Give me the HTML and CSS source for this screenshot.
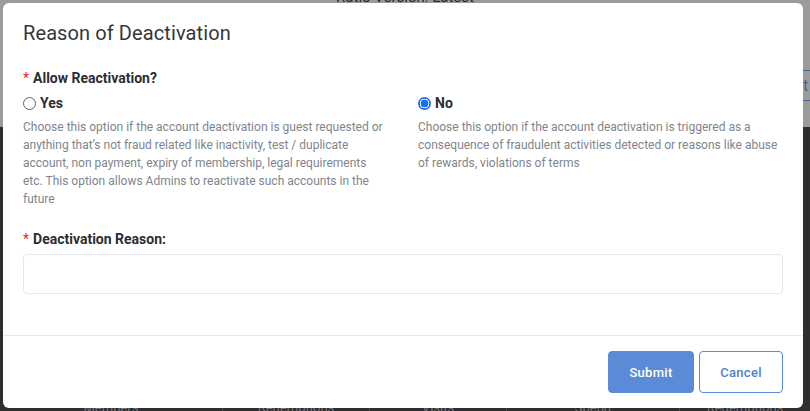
FILE: index.html
```html
<!DOCTYPE html>
<html lang="en">
<head>
<meta charset="utf-8">
<title>Reason of Deactivation</title>
<link rel="stylesheet" href="styles.css">
</head>
<body>
  <div class="page">
    <header class="page-head">
      <div class="version">Ratio Version: Latest</div>
      <button class="export">Export</button>
    </header>
    <section class="table-area">
      <div class="table-row">
        <div class="cell c1">Members</div>
        <div class="cell c2">Redemptions</div>
        <div class="cell c3">Visits</div>
        <div class="cell c4">Spend</div>
        <div class="cell c5">Redemptions</div>
      </div>
    </section>
  </div>

  <div class="backdrop"></div>

  <div class="modal" role="dialog" aria-labelledby="modal-title">
    <div class="modal-header">
      <h2 id="modal-title" class="modal-title">Reason of Deactivation</h2>
    </div>
    <div class="modal-body">
      <div class="field-label"><span class="req">*</span>Allow Reactivation?</div>
      <div class="options">
        <div class="option option-left">
          <label class="radio">
            <input type="radio" name="reactivation" value="yes">
            <span>Yes</span>
          </label>
          <p class="option-help">Choose this option if the account deactivation is guest requested or anything that’s not fraud related like inactivity, test / duplicate account, non payment, expiry of membership, legal requirements etc. This option allows Admins to reactivate such accounts in the future</p>
        </div>
        <div class="option">
          <label class="radio">
            <input type="radio" name="reactivation" value="no" checked>
            <span>No</span>
          </label>
          <p class="option-help">Choose this option if the account deactivation is triggered as a consequence of fraudulent activities detected or reasons like abuse of rewards, violations of terms</p>
        </div>
      </div>
      <div class="field-label reason-label"><span class="req">*</span>Deactivation Reason:</div>
      <input class="text-input" type="text" aria-label="Deactivation Reason">
    </div>
    <div class="modal-footer">
      <button class="btn btn-primary">Submit</button>
      <button class="btn btn-outline">Cancel</button>
    </div>
  </div>
</body>
</html>
```

FILE: styles.css
```css
* {
  box-sizing: border-box;
}

html, body {
  margin: 0;
  padding: 0;
  width: 810px;
  height: 411px;
  overflow: hidden;
}

body {
  font-family: Roboto, "Liberation Sans", Arial, sans-serif;
  background: #2e2d30;
  position: relative;
}

/* page behind the dialog (already dimmed) */
.page {
  display: flex;
  flex-direction: column;
  height: 411px;
}

.page-head {
  height: 127px;
  background: #9b9b9c;
  position: relative;
}

.version {
  text-align: center;
  font-size: 15px;
  color: #2a2a2a;
  margin-top: -11px;
  padding-left: 0;
  line-height: 16px;
}

.export {
  position: absolute;
  left: 758px;
  top: 70px;
  width: 60px;
  height: 31px;
  background: transparent;
  border: 1px solid #4b6290;
  border-radius: 3px;
  color: #4b6290;
  font: 16px Roboto, "Liberation Sans", sans-serif;
  text-align: left;
  padding: 0 0 0 3px;
}

.table-area {
  flex: 1;
  background: #2e2d30;
  display: flex;
  flex-direction: column;
  justify-content: flex-end;
}

.table-row {
  display: flex;
  height: 18px;
  margin-bottom: -6px;
}

.cell {
  color: #77767a;
  font-size: 13px;
  border-right: 1px solid #4a494d;
  text-align: center;
  line-height: 18px;
}

.c1 { width: 223px; }
.c2 { width: 147px; }
.c3 { width: 137px; }
.c4 { width: 173px; }
.c5 { width: 130px; border-right: none; }

.backdrop {
  display: none;
}

/* dialog */
.modal {
  position: absolute;
  left: 3px;
  top: 3px;
  width: 800px;
  height: 405px;
  background: #ffffff;
  border-radius: 6px;
  display: flex;
  flex-direction: column;
}

.modal-header {
  padding: 18px 20px 0;
}

.modal-title {
  margin: 0;
  font-size: 20px;
  line-height: 24px;
  font-weight: 400;
  color: #34373b;
  letter-spacing: 0.1px;
}

.modal-body {
  padding: 23px 20px 41px;
  border-bottom: 1px solid #e6eaf0;
}

.field-label {
  font-size: 14px;
  line-height: 20px;
  font-weight: 700;
  color: #2b2e32;
}

.req {
  color: #f5222d;
  margin-right: 4px;
  font-weight: 400;
}

.options {
  display: grid;
  grid-template-columns: 395px 1fr;
  margin-top: 5px;
}

.option-left {
  padding-right: 30px;
}

.radio {
  display: flex;
  align-items: center;
  gap: 4px;
  font-size: 14px;
  line-height: 20px;
  font-weight: 700;
  color: #2b2e32;
}

.radio input {
  appearance: none;
  -webkit-appearance: none;
  margin: 0;
  width: 13px;
  height: 13px;
  border-radius: 50%;
  border: 1px solid #5f6266;
  background: #fff;
}

.radio input:checked {
  border: none;
  background: radial-gradient(circle, #1a6ef5 0 3.6px, #ffffff 4.2px 4.6px, #1a6ef5 5.1px);
}

.option-help {
  margin: 5px 0 0;
  font-size: 12px;
  line-height: 18px;
  color: #80858c;
}

.reason-label {
  margin-top: 21px;
}

.text-input {
  display: block;
  width: 100%;
  height: 40px;
  margin-top: 5px;
  border: 1px solid #e2e7ef;
  border-radius: 4px;
  background: #fff;
  font: 14px Roboto, sans-serif;
  padding: 0 12px;
  outline: none;
}

.modal-footer {
  display: flex;
  justify-content: flex-end;
  gap: 5px;
  padding: 15px 20px 15px;
}

.btn {
  height: 42px;
  border-radius: 4px;
  font-family: Roboto, "Liberation Sans", sans-serif;
  font-size: 13px;
  font-weight: 500;
  letter-spacing: 0.3px;
  cursor: pointer;
}

.btn-primary {
  width: 86px;
  background: #5b8ad6;
  border: 1px solid #5b8ad6;
  color: #ffffff;
}

.btn-outline {
  width: 84px;
  background: #ffffff;
  border: 1px solid #5b8ad6;
  color: #4f80d0;
}
```
